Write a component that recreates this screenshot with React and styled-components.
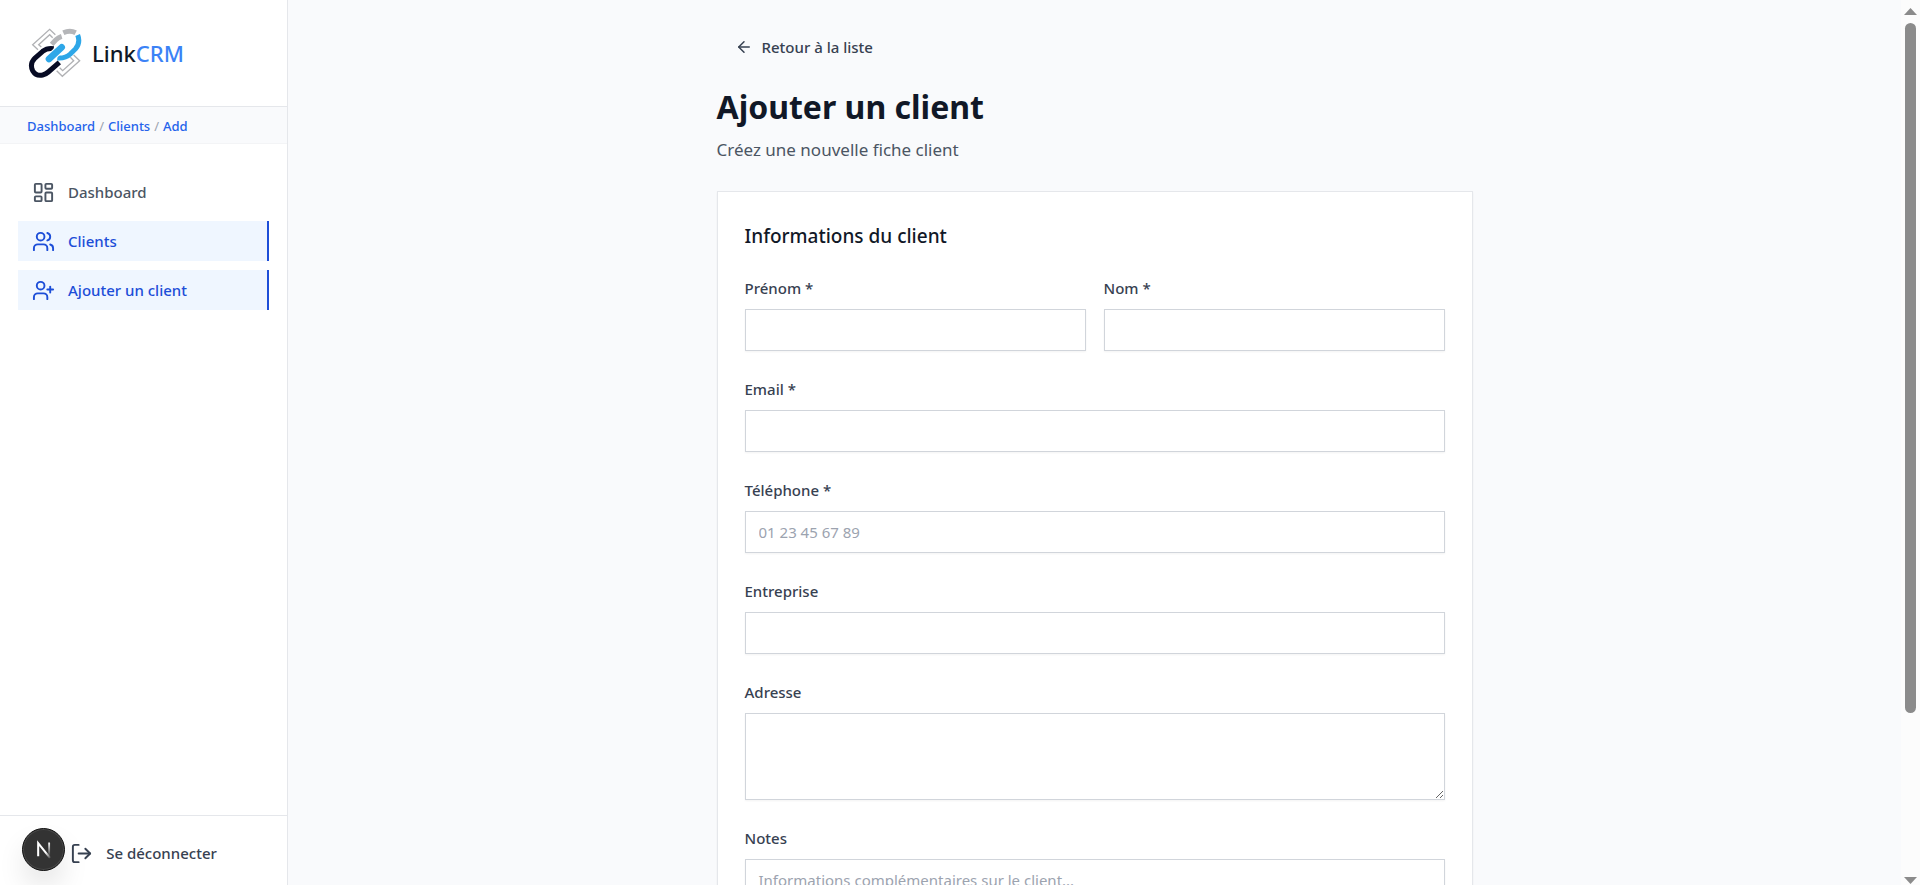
import React, { useEffect, useRef, useState } from "react";
import styled, { createGlobalStyle, css } from "styled-components";
import { ArrowLeft, LayoutDashboard, LogOut, UserPlus, Users } from "lucide-react";

const GlobalStyle = createGlobalStyle`
  *, *::before, *::after { box-sizing: border-box; }
  body {
    margin: 0;
    background: #f9fafc;
    color: #111827;
    font-family: "Segoe UI", "Noto Sans", "Open Sans", sans-serif;
    font-size: 15px;
  }
  button, input, textarea { font: inherit; color: inherit; }
  h1, h2, p { margin: 0; }
`;

const Shell = styled.div`
  display: flex;
  height: 100vh;
  overflow: hidden;
`;

const Sidebar = styled.aside`
  flex: 0 0 288px;
  display: flex;
  flex-direction: column;
  background: #fff;
  border-right: 1px solid #e5e7eb;
`;

const Brand = styled.a`
  display: flex;
  align-items: center;
  gap: 10px;
  height: 107px;
  padding: 0 28px;
  border-bottom: 1px solid #e5e7eb;
  color: #111827;
  font-size: 22px;
  font-weight: 500;
  text-decoration: none;
`;

const BrandAccent = styled.span`
  color: #3b82f6;
`;

const Breadcrumb = styled.nav`
  display: flex;
  align-items: center;
  gap: 4px;
  height: 37px;
  padding: 2px 27px 0;
  background: #f9fafc;
  border-bottom: 1px solid #f3f4f6;
  color: #9ca3af;
  font-size: 13px;
`;

const Crumb = styled.a`
  color: #2563eb;
  font-weight: 500;
  text-decoration: none;
`;

const Nav = styled.nav`
  flex: 1;
  display: flex;
  flex-direction: column;
  gap: 9px;
  padding: 28px 18px;
`;

const NavItem = styled.a`
  display: flex;
  align-items: center;
  gap: 13px;
  height: 40px;
  padding: 0 14px;
  color: #4b5563;
  font-weight: 500;
  text-decoration: none;
  ${({ $active }) =>
    $active &&
    css`
      background: #eff6ff;
      color: #1d4ed8;
      border-right: 2px solid #1d4ed8;
    `}
`;

const SidebarFooter = styled.div`
  padding: 17px 18px 12px;
  border-top: 1px solid #e5e7eb;
`;

const PlainButton = styled.button`
  display: flex;
  align-items: center;
  border: 0;
  background: none;
  color: #374151;
  font-weight: 500;
  cursor: pointer;
`;

const LogoutButton = styled(PlainButton)`
  justify-content: center;
  gap: 13px;
  width: 100%;
  height: 40px;
  padding: 0;
`;

const BackButton = styled(PlainButton)`
  gap: 9px;
  height: 40px;
  padding: 0 18px;
`;

const DevBadge = styled.button`
  position: fixed;
  left: 22px;
  bottom: 14px;
  width: 43px;
  height: 43px;
  padding: 0;
  border: 1px solid #111;
  border-radius: 50%;
  background: #333;
  box-shadow: inset 0 0 0 1px #4a4a4a, 0 16px 32px -8px rgba(0, 0, 0, 0.24);
  cursor: pointer;
`;

const Main = styled.main`
  flex: 1;
  min-width: 0;
  overflow-y: auto;
  scrollbar-width: none;
  padding: 27px;
`;

const Content = styled.div`
  max-width: 756px;
  margin: 0 auto;
`;

const Title = styled.h1`
  margin-top: 19px;
  font-size: 32px;
  line-height: 41px;
  font-weight: 700;
`;

const Subtitle = styled.p`
  margin-top: 9px;
  color: #4b5563;
  font-size: 17px;
  line-height: 28px;
`;

const Card = styled.section`
  margin-top: 27px;
  padding: 27px;
  background: #fff;
  border: 1px solid #e5e7eb;
  box-shadow: 0 1px 2px rgba(0, 0, 0, 0.05);
`;

const CardTitle = styled.h2`
  margin-bottom: 25px;
  font-size: 19px;
  line-height: 35px;
  font-weight: 500;
`;

const Form = styled.form`
  display: flex;
  flex-direction: column;
  gap: 29px;
`;

const FieldRow = styled.div`
  display: grid;
  grid-template-columns: 1fr 1fr;
  gap: 18px;
`;

const FieldBox = styled.div`
  display: flex;
  flex-direction: column;
  gap: 12px;
`;

const Label = styled.label`
  color: #374151;
  line-height: 18px;
  font-weight: 500;
`;

const control = css`
  width: 100%;
  border: 1px solid #d1d5db;
  border-radius: 0;
  background: #fff;
  box-shadow: 0 1px 2px rgba(0, 0, 0, 0.05);
  outline: none;
  &::placeholder { color: #9ca3af; opacity: 1; }
  &:focus { border-color: #2563eb; }
`;

const Input = styled.input`
  ${control}
  height: 42px;
  padding: 0 13px;
`;

const TextArea = styled.textarea`
  ${control}
  height: ${({ $height }) => $height}px;
  padding: 9px 13px;
  line-height: 22px;
  resize: vertical;
`;

const Actions = styled.div`
  display: flex;
  justify-content: flex-end;
  gap: 18px;
`;

const ActionButton = styled.button`
  height: 41px;
  padding: 0 18px;
  border: 1px solid ${({ $primary }) => ($primary ? "#2563eb" : "#d1d5db")};
  background: ${({ $primary }) => ($primary ? "#2563eb" : "#fff")};
  color: ${({ $primary }) => ($primary ? "#fff" : "#374151")};
  font-weight: 500;
`;

const ScrollRail = styled.div`
  flex: 0 0 19px;
  display: flex;
  flex-direction: column;
  align-items: center;
  gap: 8px;
  padding: 8px 0 1px;
  background: #fcfcfc;
`;

const ScrollTrack = styled.div`
  flex: 1;
  width: 11px;
`;

const ScrollThumb = styled.div`
  border-radius: 6px;
  background: #8b8b8b;
`;

const Arrow = styled.svg`
  display: block;
  width: 13px;
  height: 7px;
  fill: #8b8b8b;
`;

function LinkLogo() {
  return (
    <svg width="54" height="51" viewBox="84 84 162 153" fill="none" aria-hidden="true">
      <g stroke="#b0b1b4" strokeWidth="4">
        <path d="M166 104 149 88 98 134 114 149" />
        <path d="M158 113 149 104 116 134 124 141" />
        <path d="M221 165 239 182 187 229 170 212" />
        <path d="M211 172 221 182 188 212 179 203" />
      </g>
      <g stroke="#b5b6b9" strokeWidth="15">
        <path d="M155 133 167 120Q175 112 185 109" />
        <path d="M190 98Q210 89 227 98" />
      </g>
      <path
        d="M161 146Q142 143 128 154L105 174Q88 191 98 212Q108 229 128 225Q137 223 145 216L178 187"
        stroke="#070b24"
        strokeWidth="15"
      />
      <path d="M233 105Q242 127 227 146L211 162Q196 176 172 174" stroke="#2ea7e8" strokeWidth="15" />
      <path d="M147 177 186 141" stroke="#fff" strokeWidth="27" />
      <path d="M147 177 185 142" stroke="#2ea7e8" strokeWidth="20" strokeLinecap="round" />
    </svg>
  );
}

function DevMark() {
  return (
    <svg width="41" height="41" viewBox="0 0 40 40" fill="none" aria-hidden="true">
      <defs>
        <linearGradient id="diag" x1="22" y1="23" x2="28" y2="30" gradientUnits="userSpaceOnUse">
          <stop stopColor="#fff" />
          <stop offset="0.6" stopColor="#fff" stopOpacity="0.3" />
          <stop offset="1" stopColor="#fff" stopOpacity="0" />
        </linearGradient>
        <linearGradient id="stem" x1="25" y1="13" x2="25" y2="27" gradientUnits="userSpaceOnUse">
          <stop stopColor="#fff" />
          <stop offset="1" stopColor="#fff" stopOpacity="0" />
        </linearGradient>
      </defs>
      <path d="M26.3 28.2 14.8 13.8V26.6" stroke="url(#diag)" strokeWidth="2" />
      <path d="M25.5 13.2V26.6" stroke="url(#stem)" strokeWidth="1.8" />
    </svg>
  );
}

function Field({ id, label, type = "text", placeholder, area }) {
  return (
    <FieldBox>
      <Label htmlFor={id}>{label}</Label>
      {area ? (
        <TextArea id={id} name={id} placeholder={placeholder} $height={area} />
      ) : (
        <Input id={id} name={id} type={type} placeholder={placeholder} />
      )}
    </FieldBox>
  );
}

export default function App() {
  const mainRef = useRef(null);
  const [thumb, setThumb] = useState({ size: 100, offset: 0 });

  const updateThumb = () => {
    const el = mainRef.current;
    if (!el) return;
    const size = (el.clientHeight / el.scrollHeight) * 100;
    setThumb({ size, offset: (el.scrollTop / el.clientHeight) * 100 });
  };

  useEffect(() => {
    updateThumb();
    window.addEventListener("resize", updateThumb);
    return () => window.removeEventListener("resize", updateThumb);
  }, []);

  return (
    <>
      <GlobalStyle />
      <Shell>
        <Sidebar>
          <Brand href="#">
            <LinkLogo />
            <span>
              Link<BrandAccent>CRM</BrandAccent>
            </span>
          </Brand>
          <Breadcrumb aria-label="Fil d'Ariane">
            <Crumb href="#dashboard">Dashboard</Crumb>
            <span>/</span>
            <Crumb href="#clients">Clients</Crumb>
            <span>/</span>
            <Crumb href="#add">Add</Crumb>
          </Breadcrumb>
          <Nav>
            <NavItem href="#dashboard">
              <LayoutDashboard size={23} />
              Dashboard
            </NavItem>
            <NavItem href="#clients" $active>
              <Users size={23} />
              Clients
            </NavItem>
            <NavItem href="#add" $active>
              <UserPlus size={23} />
              Ajouter un client
            </NavItem>
          </Nav>
          <SidebarFooter>
            <LogoutButton type="button">
              <LogOut size={23} />
              Se déconnecter
            </LogoutButton>
          </SidebarFooter>
        </Sidebar>

        <Main ref={mainRef} onScroll={updateThumb}>
          <Content>
            <BackButton type="button">
              <ArrowLeft size={18} />
              Retour à la liste
            </BackButton>
            <Title>Ajouter un client</Title>
            <Subtitle>Créez une nouvelle fiche client</Subtitle>
            <Card>
              <CardTitle>Informations du client</CardTitle>
              <Form>
                <FieldRow>
                  <Field id="prenom" label="Prénom *" />
                  <Field id="nom" label="Nom *" />
                </FieldRow>
                <Field id="email" label="Email *" type="email" />
                <Field id="telephone" label="Téléphone *" type="tel" placeholder="01 23 45 67 89" />
                <Field id="entreprise" label="Entreprise" />
                <Field id="adresse" label="Adresse" area={87} />
                <Field
                  id="notes"
                  label="Notes"
                  placeholder="Informations complémentaires sur le client..."
                  area={101}
                />
                <Actions>
                  <ActionButton type="button">Annuler</ActionButton>
                  <ActionButton type="submit" $primary>
                    Ajouter
                  </ActionButton>
                </Actions>
              </Form>
            </Card>
          </Content>
        </Main>

        <ScrollRail aria-hidden="true">
          <Arrow viewBox="0 0 13 7">
            <path d="M0 7 6.5 0 13 7Z" />
          </Arrow>
          <ScrollTrack>
            <ScrollThumb style={{ height: `${thumb.size}%`, transform: `translateY(${thumb.offset}%)` }} />
          </ScrollTrack>
          <Arrow viewBox="0 0 13 7">
            <path d="M0 0 6.5 7 13 0Z" />
          </Arrow>
        </ScrollRail>
      </Shell>
      <DevBadge type="button" aria-label="Outils de développement">
        <DevMark />
      </DevBadge>
    </>
  );
}
